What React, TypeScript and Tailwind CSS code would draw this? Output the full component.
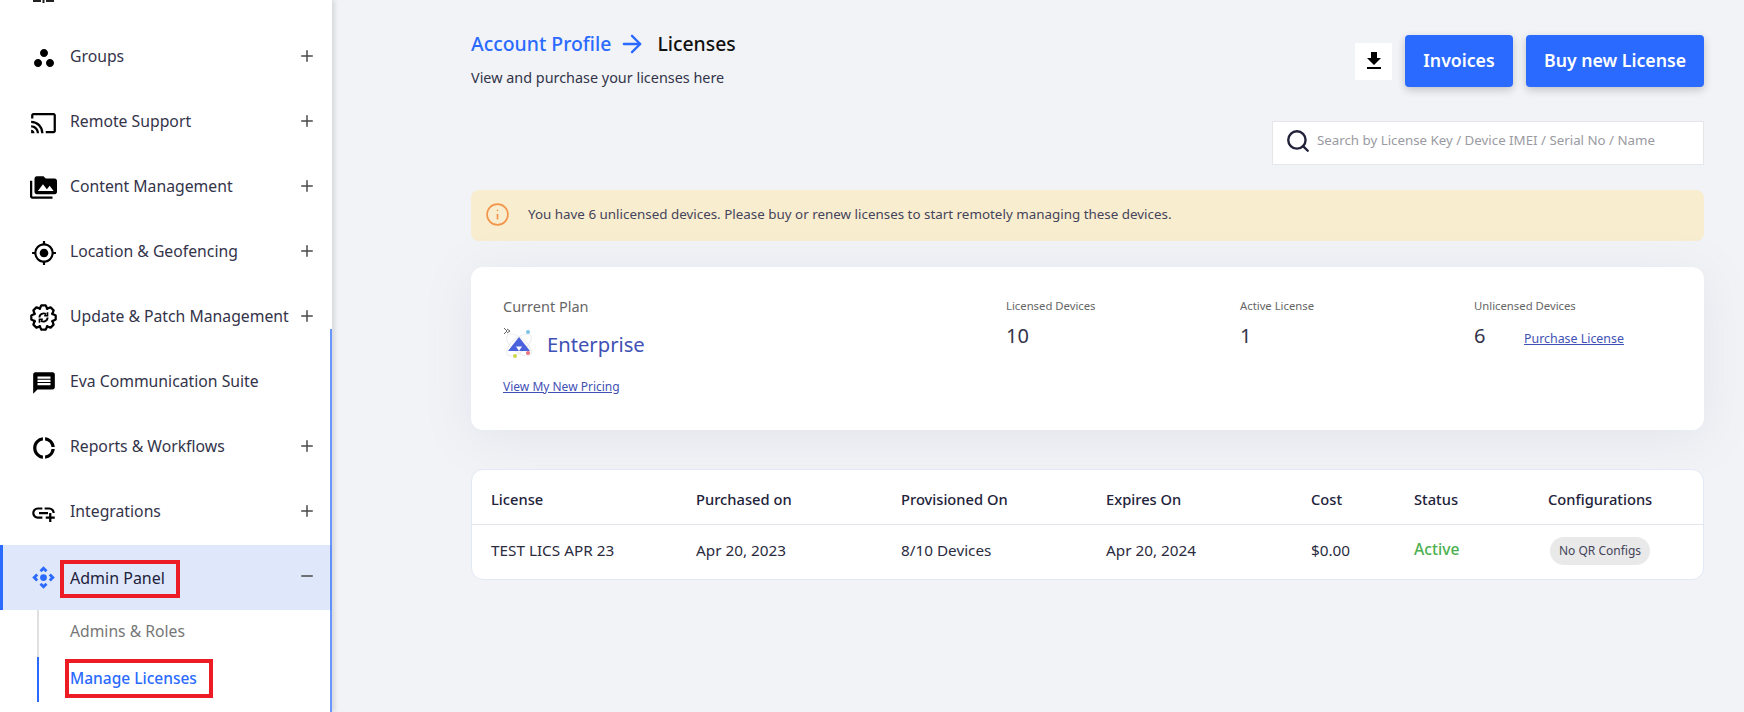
import { ArrowRight, Info, Minus, Plus, Search } from "lucide-react"
import type { ReactNode } from "react"
import {
  MdCast,
  MdFileDownload,
  MdGpsFixed,
  MdMessage,
  MdOutlineAddLink,
  MdOutlineControlCamera,
  MdOutlineDonutLarge,
  MdPermMedia,
  MdWorkspaces,
} from "react-icons/md"

// gear outline with 8 teeth, built from polar points
const gearPath = Array.from({ length: 8 }, (_, i) => {
  const a = (i * Math.PI) / 4 - Math.PI / 2
  const pts = [
    [8.4, a - 0.42],
    [11, a - 0.17],
    [11, a + 0.17],
    [8.4, a + 0.42],
  ]
  return pts.map(([r, t]) => `${(12 + r * Math.cos(t)).toFixed(2)} ${(12 + r * Math.sin(t)).toFixed(2)}`).join(" L")
})
  .map((s, i) => (i === 0 ? `M${s}` : `L${s}`))
  .join(" ")

function PatchIcon() {
  return (
    <svg width="27" height="27" viewBox="0 0 24 24" fill="none" stroke="currentColor">
      <path d={`${gearPath} Z`} strokeWidth="2" strokeLinejoin="round" />
      <path d="M8.4 12a3.6 3.6 0 0 1 6-2.7" strokeWidth="1.7" />
      <path d="M15.6 12a3.6 3.6 0 0 1-6 2.7" strokeWidth="1.7" />
      <path d="M15.6 7.4v3h-3" strokeWidth="1.4" />
      <path d="M8.4 16.6v-3h3" strokeWidth="1.4" />
    </svg>
  )
}

const navItems: { name: string; icon: ReactNode; expandable: boolean }[] = [
  { name: "Groups", icon: <MdWorkspaces size={24} />, expandable: true },
  { name: "Remote Support", icon: <MdCast size={28} />, expandable: true },
  { name: "Content Management", icon: <MdPermMedia size={27} />, expandable: true },
  { name: "Location & Geofencing", icon: <MdGpsFixed size={26} />, expandable: true },
  { name: "Update & Patch Management", icon: <PatchIcon />, expandable: true },
  { name: "Eva Communication Suite", icon: <MdMessage size={26} />, expandable: false },
  { name: "Reports & Workflows", icon: <MdOutlineDonutLarge size={26} />, expandable: true },
  { name: "Integrations", icon: <MdOutlineAddLink size={30} />, expandable: true },
]

const columns = [
  { title: "License", value: "TEST LICS APR 23" },
  { title: "Purchased on", value: "Apr 20, 2023" },
  { title: "Provisioned On", value: "8/10 Devices" },
  { title: "Expires On", value: "Apr 20, 2024" },
  { title: "Cost", value: "$0.00" },
]

const stats = [
  { label: "Licensed Devices", value: "10" },
  { label: "Active License", value: "1" },
]

function PlanLogo() {
  return (
    <svg width="32" height="36" viewBox="0 0 32 36" fill="none">
      <ellipse cx="16" cy="19" rx="15" ry="7" stroke="#ececec" transform="rotate(40 16 19)" />
      <ellipse cx="16" cy="19" rx="15" ry="7" stroke="#ececec" transform="rotate(-40 16 19)" />
      <path d="M16 11 L27 25 H5 Z" fill="#4a63dc" />
      <path d="M13 20.5 H19 L16 25 Z" fill="#ffffff" />
      <circle cx="25" cy="6" r="2" fill="#7cc4e4" />
      <circle cx="25" cy="27" r="2" fill="#ee6f80" />
      <circle cx="12" cy="30" r="2" fill="#cdd64f" />
      <path d="M1 2 L4 5 L1 8 M4 3 L7 5 L4 7" stroke="#666666" strokeWidth="1" />
    </svg>
  )
}

function Sidebar() {
  return (
    <aside className="relative w-[332px] h-[712px] shrink-0 overflow-hidden bg-white shadow-[3px_0_4px_rgba(0,0,0,0.1)]">
      <div className="h-[25px] pl-[33px]">
        <svg width="21" height="3" viewBox="0 0 21 3" fill="#222222">
          <rect x="0" y="0" width="8" height="2" />
          <rect x="9.5" y="0" width="2" height="3" />
          <rect x="13" y="0" width="8" height="2" />
        </svg>
      </div>
      {navItems.map((item) => (
        <div key={item.name} className="flex items-center h-[65px] pl-[30px]">
          <span className="w-[27px] flex justify-center text-black shrink-0">{item.icon}</span>
          <span className="ml-[13px] pb-[2px] text-[15.75px] text-[#33334a] whitespace-nowrap">{item.name}</span>
          {item.expandable && (
            <Plus className="absolute left-[298px] w-[18px] h-[18px] -mt-[4px] text-[#4a4a4a]" strokeWidth={2} />
          )}
        </div>
      ))}
      <div className="relative flex items-center h-[65px] pl-[27px] bg-[#dfe7fb] border-l-[3px] border-[#2a6aff]">
        <span className="w-[27px] flex justify-center text-[#2a6aff] shrink-0">
          <MdOutlineControlCamera size={27} />
        </span>
        <span className="ml-[13px] text-[16px] text-[#22223a]">Admin Panel</span>
        <Minus className="absolute left-[295px] w-[18px] h-[18px] -mt-[4px] text-[#4a4a4a]" strokeWidth={2} />
        <div className="absolute left-[57px] top-[15px] w-[120px] h-[38px] border-[4px] border-[#ed1c24]" />
      </div>
      <div className="ml-[37px] border-l-2 border-[#e0e0e0] h-[47px] flex items-center pl-[31px] pb-[4px] text-[15.7px] text-[#777777]">
        Admins &amp; Roles
      </div>
      <div className="relative ml-[37px] border-l-2 border-[#2a6aff] h-[45px] flex items-center pl-[31px] pb-[2px] text-[15.5px] font-medium text-[#2a6aff]">
        Manage Licenses
        <div className="absolute left-[26px] top-[2px] w-[148px] h-[39px] border-[4px] border-[#ed1c24]" />
      </div>
      <div className="absolute right-0 top-[329px] bottom-0 w-[2px] bg-[#2a6aff]/70" />
    </aside>
  )
}

export default function App() {
  return (
    <div className="flex w-[1744px] h-[712px] overflow-hidden bg-[#f1f3f6] font-['Noto_Sans',sans-serif]">
      <Sidebar />
      <main className="flex-1 pl-[139px] pr-[40px]">
        <div className="flex justify-between pt-[34px]">
          <div>
            <div className="flex items-center text-[19.4px] font-medium h-[20px]">
              <span className="text-[#2a6aff]">Account Profile</span>
              <ArrowRight className="ml-[7px] w-[28px] h-[28px] text-[#2a6aff]" strokeWidth={2} />
              <span className="ml-[11px] text-[#111111]">Licenses</span>
            </div>
            <p className="mt-[13px] text-[14.4px] leading-[21px] text-[#33334a]">View and purchase your licenses here</p>
          </div>
          <div className="flex items-center gap-[13px] h-[54px]">
            <div className="flex items-center justify-center w-[37px] h-[37px] bg-white text-black">
              <MdFileDownload size={24} />
            </div>
            <button className="w-[108px] h-[52px] pb-[2px] rounded bg-[#2a6aff] text-[17.7px] font-semibold text-white shadow-[0_3px_8px_rgba(0,0,0,0.2)]">
              Invoices
            </button>
            <button className="w-[178px] h-[52px] pb-[2px] rounded bg-[#2a6aff] text-[17.7px] font-semibold text-white shadow-[0_3px_8px_rgba(0,0,0,0.2)]">
              Buy new License
            </button>
          </div>
        </div>

        <div className="flex justify-end mt-[33px]">
          <div className="flex items-center w-[432px] h-[44px] pl-[12px] pb-[4px] bg-white border border-[#e4e6ea]">
            <Search className="w-[26px] h-[26px] text-[#22223a]" strokeWidth={2.2} />
            <span className="ml-[6px] text-[13.3px] text-[#9a9aa2]">Search by License Key / Device IMEI / Serial No / Name</span>
          </div>
        </div>

        <div className="flex items-center h-[51px] mt-[25px] pl-[14px] pb-[2px] rounded-lg bg-[#f9edcf] text-[13.4px] text-[#44445a]">
          <Info className="w-[25px] h-[25px] text-[#f2954a]" strokeWidth={1.6} />
          <span className="ml-[18px]">You have 6 unlicensed devices. Please buy or renew licenses to start remotely managing these devices.</span>
        </div>

        <section className="flex h-[163px] mt-[26px] pl-[32px] pt-[27px] rounded-xl bg-white shadow-[0_8px_50px_rgba(120,130,170,0.12)]">
          <div className="w-[503px]">
            <p className="text-[14.5px] leading-[24px] text-[#666666]">Current Plan</p>
            <div className="flex items-center mt-[8px]">
              <PlanLogo />
              <span className="ml-[12px] text-[20.2px] text-[#3f51b5]">Enterprise</span>
            </div>
            <a className="block mt-[16px] text-[12px] text-[#3f51b5] underline">View My New Pricing</a>
          </div>
          {stats.map((stat) => (
            <div key={stat.label} className="w-[234px] mt-[2px]">
              <p className="text-[11.3px] leading-[20px] text-[#666666]">{stat.label}</p>
              <p className="mt-[5px] text-[20px] leading-[30px] text-[#33334a]">{stat.value}</p>
            </div>
          ))}
          <div className="mt-[2px]">
            <p className="text-[11.3px] leading-[20px] text-[#666666]">Unlicensed Devices</p>
            <div className="flex items-center mt-[5px]">
              <span className="w-[50px] text-[20px] leading-[30px] text-[#33334a]">6</span>
              <a className="mt-[6px] text-[12.4px] text-[#3f51b5] underline">Purchase License</a>
            </div>
          </div>
        </section>

        <section className="mt-[39px] rounded-xl bg-white border border-[#e3e8f5]">
          <div className="flex items-center h-[55px] pt-[5px] pl-[19px] border-b border-[#e3e5ea] text-[14.7px] font-medium text-[#22223a]">
            {columns.map((col, i) => (
              <div key={col.title} className={i === 4 ? "w-[103px]" : "w-[205px]"}>
                {col.title}
              </div>
            ))}
            <div className="w-[134px]">Status</div>
            <div>Configurations</div>
          </div>
          <div className="flex items-center h-[54px] pb-[4px] pl-[19px] text-[15.3px] text-[#2b2b40]">
            {columns.map((col, i) => (
              <div key={col.title} className={i === 4 ? "w-[103px]" : "w-[205px]"}>
                {col.value}
              </div>
            ))}
            <div className="w-[136px] text-[15.7px] font-medium text-[#4caf50]">Active</div>
            <span className="flex items-center justify-center w-[100px] h-[28px] mt-[2px] rounded-full bg-[#e9e9e9] text-[12px] text-[#44445a]">
              No QR Configs
            </span>
          </div>
        </section>
      </main>
    </div>
  )
}
